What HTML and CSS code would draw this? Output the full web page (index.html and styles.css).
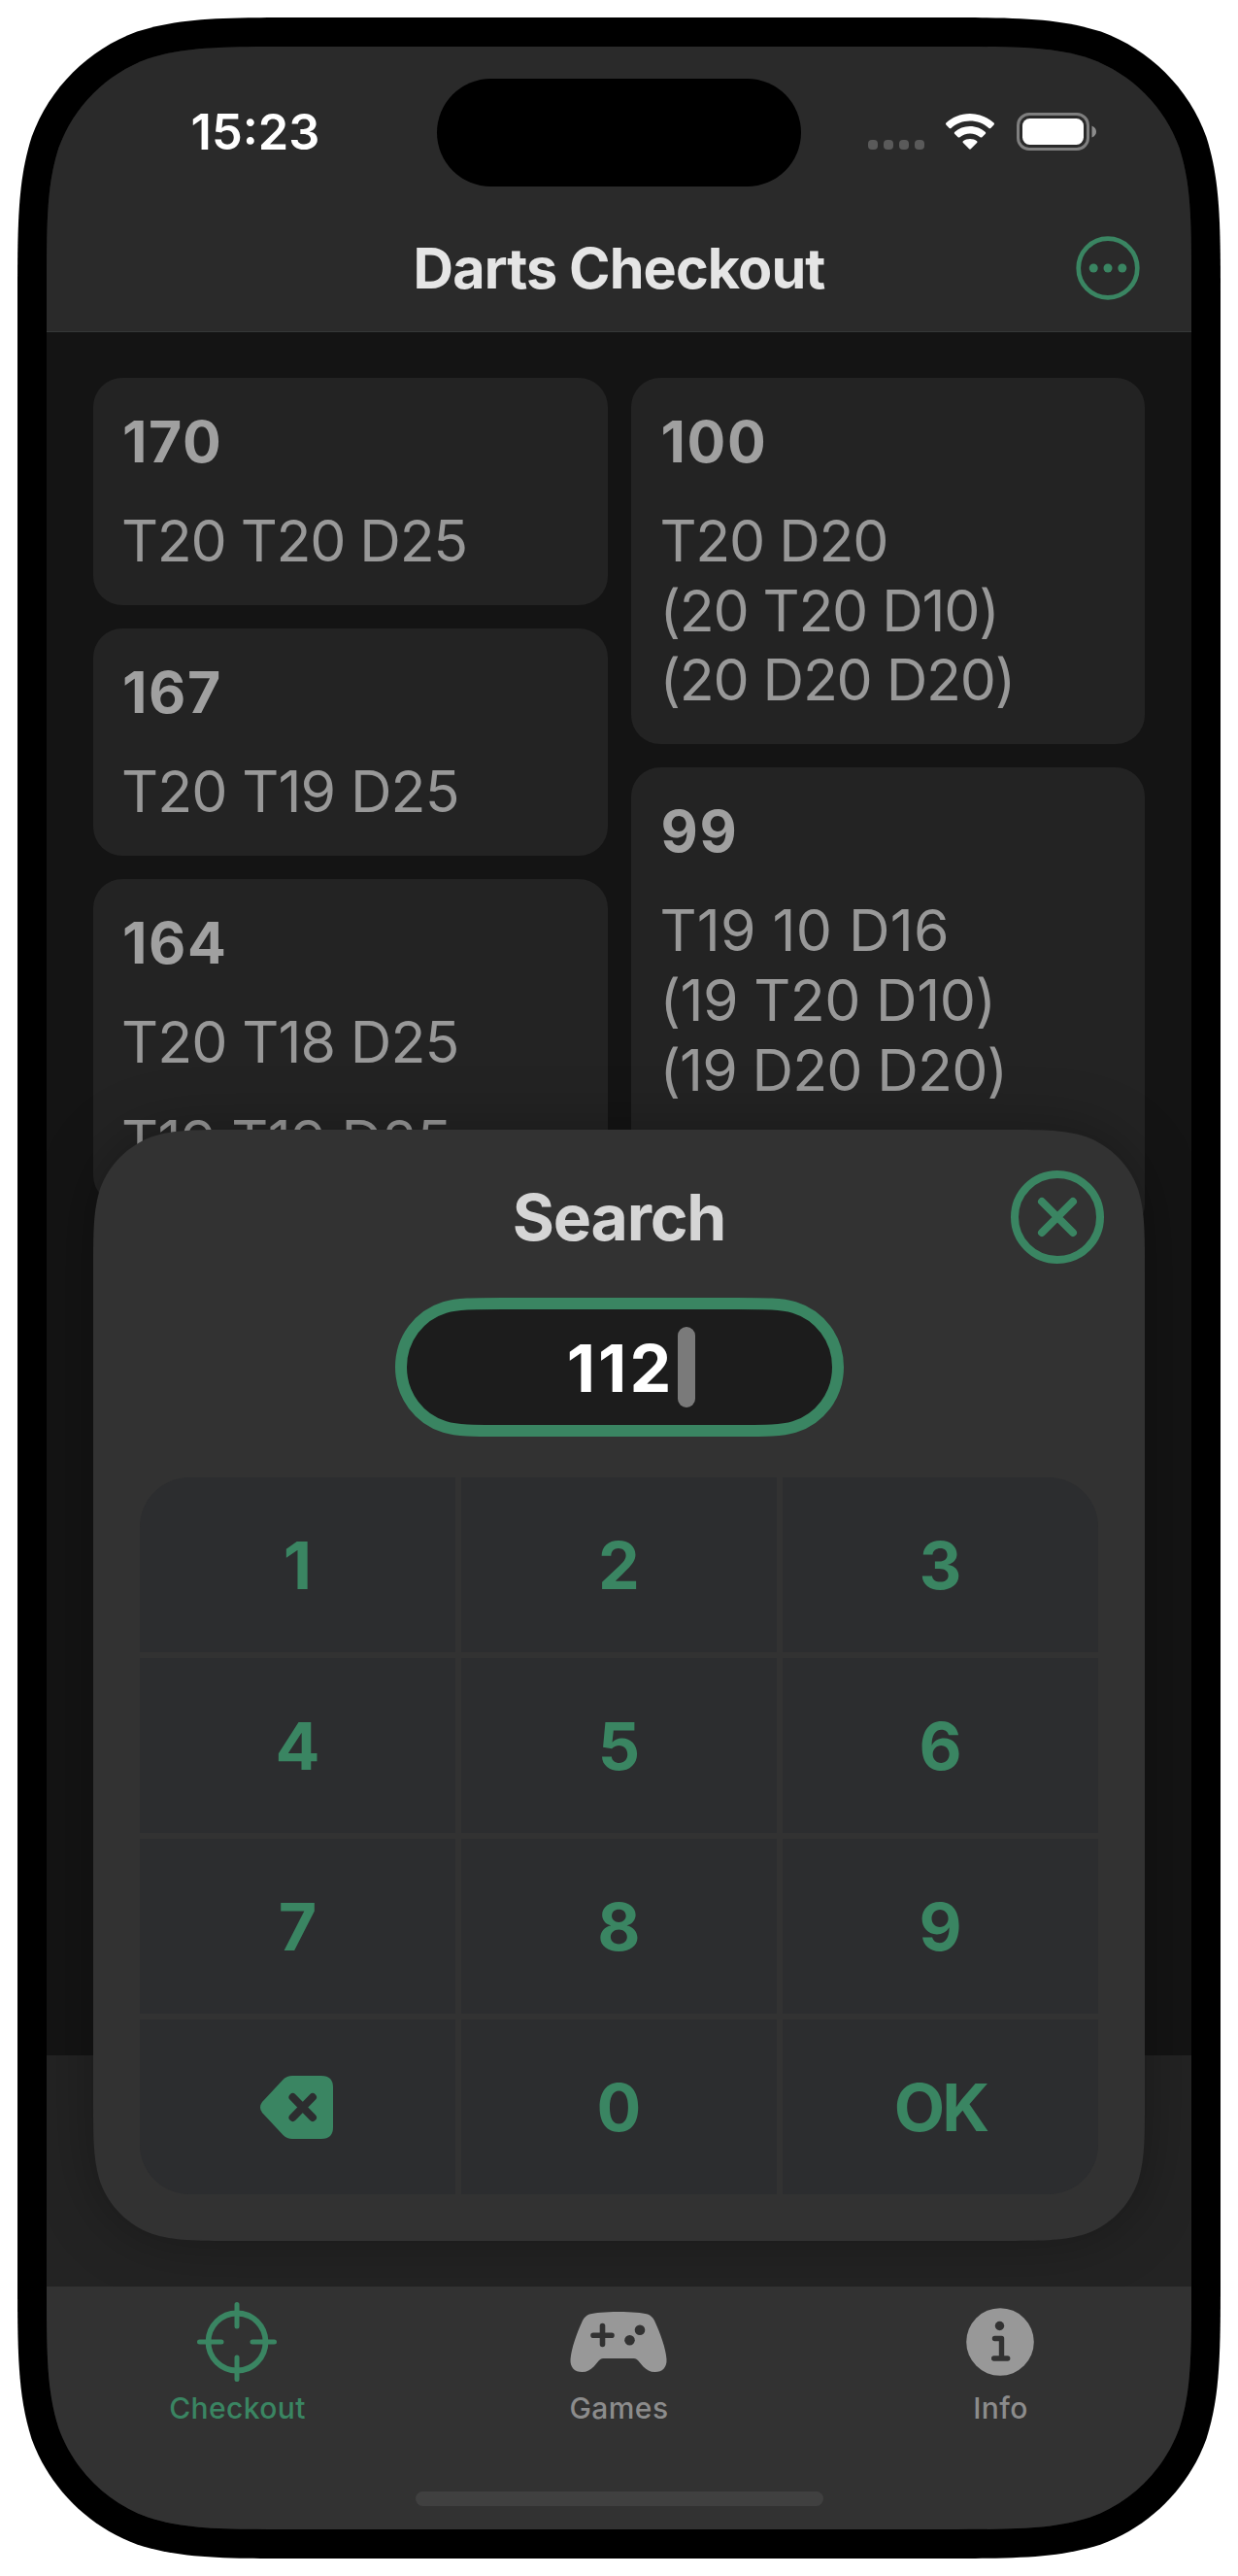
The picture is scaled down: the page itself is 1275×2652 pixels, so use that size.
FILE: index.html
```html
<!DOCTYPE html>
<html lang="en">
<head>
<meta charset="utf-8">
<title>Darts Checkout</title>
<link rel="stylesheet" href="styles.css">
</head>
<body>
<div class="phone">
  <div class="screen">
    <header class="topbar">
      <div class="status">
        <div class="status-left"><span class="time">15:23</span></div>
        <div class="island"></div>
        <div class="status-right">
          <div class="signal"><i></i><i></i><i></i><i></i></div>
          <svg class="wifi" width="50" height="37" viewBox="0 0 50 37">
            <path d="M25 0C35 0 43.600 4 49.600 9.600Q50.400 10.500 49.600 11.400L46.300 14.900Q45.400 15.700 44.500 14.900C39.300 10.200 32.500 7.500 25 7.500S10.700 10.200 5.500 14.900Q4.600 15.700 3.700 14.900L.4 11.400Q-.4 10.500 .4 9.600C6.400 4 15 0 25 0Z"/>
            <path d="M25 13C31.200 13 36.700 15.300 40.900 19Q41.700 19.900 40.900 20.800L37.400 24.200Q36.500 25 35.500 24.200C32.700 21.900 29 20.500 25 20.500S17.300 21.900 14.500 24.200Q13.500 25 12.600 24.200L9.100 20.800Q8.300 19.900 9.100 19C13.300 15.300 18.800 13 25 13Z"/>
            <path d="M25 26C27.800 26 30.200 26.900 32.100 28.300Q32.900 29.200 32.100 30.100L25.900 36.300Q25 37.100 24.100 36.300L17.900 30.100Q17.100 29.200 17.900 28.300C19.800 26.900 22.200 26 25 26Z"/>
          </svg>
          <svg class="battery" width="82" height="39" viewBox="0 0 82 39">
            <rect x="1.500" y="1.500" width="72" height="36" rx="11.500" fill="none" stroke="#7f7f7f" stroke-width="3"/>
            <rect x="6" y="6" width="63" height="27" rx="7.500" fill="#fff"/>
            <path d="M77.500 13.500Q82 15.500 82 19.500T77.500 25.500Z" fill="#8c8c8c"/>
          </svg>
        </div>
      </div>
      <div class="nav">
        <h1 class="nav-title">Darts Checkout</h1>
        <svg class="more" width="66" height="66" viewBox="0 0 66 66">
          <circle cx="33" cy="33" r="30.300" fill="none" stroke="#3a8562" stroke-width="4.700"/>
          <circle cx="18.200" cy="33" r="4.500"/><circle cx="33" cy="33" r="4.500"/><circle cx="47.800" cy="33" r="4.500"/>
        </svg>
      </div>
    </header>

    <main class="main">
      <div class="columns">
        <div class="column">
          <section class="card"><h2>170</h2><p>T20 T20 D25</p></section>
          <section class="card"><h2>167</h2><p class="loose">T20 T19 D25</p></section>
          <section class="card"><h2>164</h2><p class="loose">T20 T18 D25</p><p class="looser">T19 T19 D25</p></section>
        </div>
        <div class="column column-right">
          <section class="card"><h2>100</h2><p>T20 D20<br>(20 T20 D10)<br>(20 D20 D20)</p></section>
          <section class="card card-tall"><h2>99</h2><p><span class="loosest">T19 10 D16</span><br><span class="looser">(19 T20 D10)</span><br><span class="loose">(19 D20 D20)</span></p></section>
        </div>
      </div>
      <div class="footer-band"></div>

      <div class="sheet-shadow">
        <div class="sheet">
          <div class="sheet-head">
            <h2 class="sheet-title">Search</h2>
            <svg class="close" width="96" height="96" viewBox="0 0 96 96">
              <g fill="none" stroke="#3a8562" stroke-width="8" stroke-linecap="round">
                <circle cx="48" cy="48" r="44"/><path d="M32 32L64 64M64 32L32 64"/>
              </g>
            </svg>
          </div>
          <div class="field">
            <svg class="field-shape" width="462" height="143" viewBox="0 0 462 143">
              <path d="M110 6H352C382 6 398 6 411 10C437 18 456 42 456 71.500S437 125 411 133C398 137 382 137 352 137H110C80 137 64 137 51 133C25 125 6 101 6 71.500S25 18 51 10C64 6 80 6 110 6Z" fill="#1c1c1c" stroke="#3a8562" stroke-width="12"/>
            </svg>
            <span class="value">112</span><span class="caret"></span>
          </div>
          <div class="keypad">
            <div class="key">1</div><div class="key">2</div><div class="key">3</div>
            <div class="key">4</div><div class="key">5</div><div class="key">6</div>
            <div class="key">7</div><div class="key">8</div><div class="key">9</div>
            <div class="key">
              <svg class="backspace" width="75" height="65" viewBox="0 0 75 65">
                <path d="M33 0H63Q75 0 75 12V53Q75 65 63 65H33Q27.500 65 23.500 61L2 38Q-2 32.500 2 27L23.500 4Q27.500 0 33 0Z" fill="#3a8562"/>
                <path d="M33.500 22L54 43M54 22L33.500 43" stroke="#2c2d2f" stroke-width="8" stroke-linecap="round"/>
              </svg>
            </div>
            <div class="key">0</div><div class="key key-ok">OK</div>
          </div>
        </div>
      </div>
    </main>

    <nav class="tabbar">
      <div class="tabs">
        <div class="tab tab-active">
          <svg width="84" height="84" viewBox="0 0 84 84">
            <g fill="none" stroke="#3a8562" stroke-linecap="round">
              <circle cx="42" cy="42" r="29.500" stroke-width="5.800"/>
              <path d="M42 3.500V26M42 58V80.500M3.500 42H26M58 42H80.500" stroke-width="5"/>
            </g>
          </svg>
          <span>Checkout</span>
        </div>
        <div class="tab">
          <svg width="100" height="84" viewBox="0 0 100 84">
            <path d="M50 11C64 11 74 12 80 13.500Q84.500 15 87 20C93 33 98.500 48 99.500 60C100 68.500 95 73 87.500 73C82.500 73 79 71 75.500 67.500L70 61Q68 59 66 59H34Q32 59 30 61L24.500 67.500C21 71 17.500 73 12.500 73C5 73 0 68.500 .5 60C1.500 48 7 33 13 20Q15.500 15 20 13.500C26 12 36 11 50 11Z" fill="#989898"/>
            <path d="M33.500 25.500V44.500M24 35.300H43" stroke="#323232" stroke-width="5.600" stroke-linecap="round"/>
            <circle cx="72" cy="29.700" r="5.300" fill="#323232"/><circle cx="61.500" cy="40.300" r="5.300" fill="#323232"/>
          </svg>
          <span>Games</span>
        </div>
        <div class="tab">
          <svg width="84" height="84" viewBox="0 0 84 84">
            <circle cx="42" cy="42" r="34.800" fill="#989898"/>
            <circle cx="41.500" cy="25.500" r="4.700" fill="#323232"/>
            <path d="M36.500 38.500H43.500V59M35.700 59H49.700" fill="none" stroke="#323232" stroke-width="5.400" stroke-linecap="round" stroke-linejoin="round"/>
          </svg>
          <span>Info</span>
        </div>
      </div>
      <div class="home"></div>
    </nav>
  </div>
</div>
</body>
</html>
```

FILE: styles.css
```css
* { box-sizing: border-box; }
body {
  margin: 0;
  padding: 18px;
  background: #fff;
  font-family: Inter, "Liberation Sans", sans-serif;
}
h1, h2, p { margin: 0; }
svg { display: block; flex: none; }

.phone {
  width: 1239px;
  height: 2616px;
  padding: 30px;
  background: #000;
  clip-path: path("M298.1 0H940.9C1026.7 0 1069.7 0 1115.9 14.6C1166.3 33 1206 72.7 1224.4 123.1C1239 169.3 1239 212.3 1239 298.1V2317.9C1239 2403.7 1239 2446.7 1224.4 2492.9C1206 2543.3 1166.3 2583 1115.9 2601.4C1069.7 2616 1026.7 2616 940.9 2616H298.1C212.3 2616 169.3 2616 123.1 2601.4C72.7 2583 33 2543.3 14.6 2492.9C0 2446.7 0 2403.7 0 2317.9V298.1C0 212.3 0 169.3 14.6 123.1C33 72.7 72.7 33 123.1 14.6C169.3 0 212.3 0 298.1 0Z");
}
.screen {
  display: flex;
  flex-direction: column;
  width: 1179px;
  height: 2556px;
  background: #141414;
  clip-path: path("M252.2 0H926.8C999.4 0 1035.7 0 1074.8 12.4C1117.5 27.9 1151.1 61.5 1166.6 104.2C1179 143.3 1179 179.6 1179 252.2V2303.8C1179 2376.4 1179 2412.7 1166.6 2451.8C1151.1 2494.5 1117.5 2528.1 1074.8 2543.6C1035.7 2556 999.4 2556 926.8 2556H252.2C179.6 2556 143.3 2556 104.2 2543.6C61.5 2528.1 27.9 2494.5 12.4 2451.8C0 2412.7 0 2376.4 0 2303.8V252.2C0 179.6 0 143.3 12.4 104.2C27.9 61.5 61.5 27.9 104.2 12.4C143.3 0 179.6 0 252.2 0Z");
}

/* status bar and navigation */
.topbar {
  height: 294px;
  background: #2a2a2a;
  border-bottom: 1px solid #363838;
}
.status {
  display: grid;
  grid-template-columns: 402px 375px 402px;
  height: 177px;
  padding-top: 33px;
}
.status-left { padding: 25px 0 0 28px; text-align: center; }
.time {
  font-size: 50.5px;
  line-height: 60px;
  font-weight: 600;
  letter-spacing: 0;
  color: #fff;
}
.island { height: 111px; border-radius: 56px; background: #000; }
.status-right { display: flex; align-items: flex-start; padding: 35px 0 0 69px; }
.signal { display: flex; gap: 6px; padding-top: 28px; margin-right: 22px; }
.signal i { width: 10px; height: 10px; border-radius: 4px; background: #5a5a5a; }
.wifi { margin: 1px 23px 0 0; fill: #fff; }
.nav { display: grid; grid-template-columns: 1fr auto 1fr; align-items: center; height: 101px; }
.nav-title {
  grid-column: 2;
  font-size: 57.5px;
  line-height: 72px;
  font-weight: 700;
  letter-spacing: -0.9px;
  color: #e5e5e5;
}
.more { justify-self: end; margin-right: 53px; fill: #3a8562; }

/* checkout list */
.main { position: relative; flex: 1; overflow: hidden; }
.columns { display: grid; grid-template-columns: 1fr 1fr; gap: 24px; padding: 47px 48px 0; }
.column { display: flex; flex-direction: column; gap: 24px; }
.card {
  display: flex;
  flex-direction: column;
  gap: 30px;
  min-height: 234px;
  padding: 30px;
  border-radius: 30px;
  background: #232323;
  font-size: 59px;
  line-height: 71.7px;
  color: #989898;
}
.card-tall { min-height: 480px; }
.column-right .card { padding-left: 31px; }
.card h2 { font-size: 59px; line-height: 72px; font-weight: 700; color: #a0a0a0; letter-spacing: 1.6px; }
.card p { font-weight: 400; font-kerning: none; letter-spacing: -1.3px; margin-left: -1px; }
.card .loose { letter-spacing: -.9px; }
.card .looser { letter-spacing: -.5px; }
.card .loosest { letter-spacing: .2px; }
.footer-band { position: absolute; left: 0; right: 0; bottom: 0; height: 238px; background: #232323; }

/* search sheet */
.sheet-shadow {
  position: absolute;
  left: 48px;
  bottom: 47px;
  filter: drop-shadow(0 0 30px rgba(0, 0, 0, .3));
}
.sheet {
  display: flex;
  flex-direction: column;
  align-items: center;
  width: 1083px;
  height: 1144px;
  padding-top: 42px;
  background: #323232;
  clip-path: path("M146.8 0H936.2C978.5 0 999.6 0 1022.4 7.2C1047.2 16.2 1066.8 35.8 1075.8 60.6C1083 83.4 1083 104.5 1083 146.8V997.2C1083 1039.5 1083 1060.6 1075.8 1083.4C1066.8 1108.2 1047.2 1127.8 1022.4 1136.8C999.6 1144 978.5 1144 936.2 1144H146.8C104.5 1144 83.4 1144 60.6 1136.8C35.8 1127.8 16.2 1108.2 7.2 1083.4C0 1060.6 0 1039.5 0 997.2V146.8C0 104.5 0 83.4 7.2 60.6C16.2 35.8 35.8 16.2 60.6 7.2C83.4 0 104.5 0 146.8 0Z");
}
.sheet-head { display: grid; grid-template-columns: 1fr auto 1fr; align-items: center; width: 100%; height: 96px; }
.sheet-title { grid-column: 2; font-size: 66px; line-height: 80px; font-weight: 700; letter-spacing: -1.2px; color: #d5d5d5; }
.close { justify-self: end; margin-right: 42px; }
.field {
  position: relative;
  display: flex;
  align-items: center;
  justify-content: center;
  width: 462px;
  height: 143px;
  margin-top: 35px;
  padding-left: 25px;
}
.field-shape { position: absolute; left: 0; top: 0; }
.value { position: relative; font-size: 68px; line-height: 82px; font-weight: 700; font-kerning: none; letter-spacing: 3px; color: #fff; }
.caret { position: relative; width: 18px; height: 83px; margin-left: 4px; border-radius: 9px; background: #7a7a7a; }
.keypad {
  display: grid;
  grid-template-columns: repeat(3, 325px);
  grid-auto-rows: 180px;
  gap: 6px;
  margin-top: 42px;
  border-radius: 51px;
  overflow: hidden;
}
.key {
  display: flex;
  align-items: center;
  justify-content: center;
  background: #2c2d2f;
  font-size: 68px;
  font-weight: 700;
  color: #3a8562;
}
.key-ok { letter-spacing: -3px; }
.backspace { margin-right: 3px; }

/* tab bar */
.tabbar { display: flex; flex-direction: column; align-items: center; height: 250px; background: #323232; }
.tabs { display: grid; grid-template-columns: repeat(3, 393px); height: 211px; }
.tab {
  display: flex;
  flex-direction: column;
  align-items: center;
  padding-top: 15px;
  font-size: 30px;
  line-height: 36px;
  font-weight: 500;
  letter-spacing: .4px;
  color: #8c8c8c;
}
.tab svg { margin-right: 2px; }
.tab span { margin-top: 8px; }
.tab-active { color: #3a8562; }
.home { width: 420px; height: 15px; border-radius: 8px; background: #404040; }
```
